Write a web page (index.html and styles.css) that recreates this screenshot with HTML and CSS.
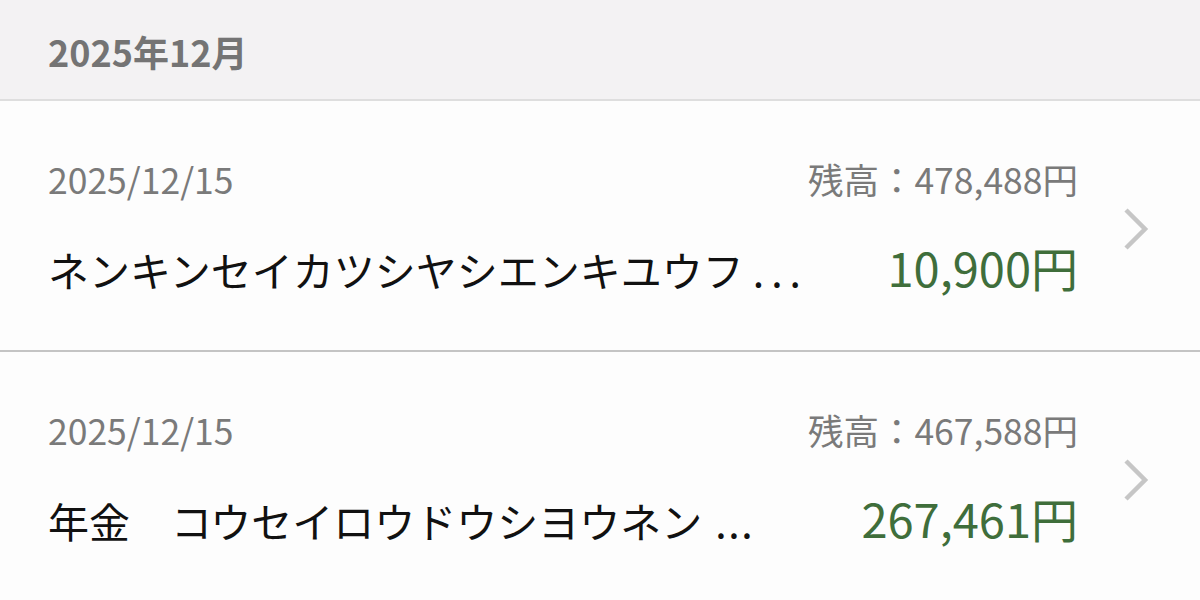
FILE: index.html
```html
<!DOCTYPE html>
<html lang="ja">
<head>
<meta charset="utf-8">
<link rel="stylesheet" href="styles.css">
</head>
<body>
<div class="page">
  <div class="month">2025年12月</div>
  <div class="row">
    <div class="main">
      <div class="line top">
        <span class="date">2025/12/15</span>
        <span class="balance">残高：478,488円</span>
      </div>
      <div class="line bottom">
        <span class="name">ネンキンセイカツシヤシエンキユウフ<span class="dots wide">...</span></span>
        <span class="amount">10,900円</span>
      </div>
    </div>
    <div class="chev">
      <svg width="28" height="44" viewBox="0 0 28 44"><path d="M4 3 L23 22 L4 41" fill="none" stroke="#c6c6c6" stroke-width="4.5"/></svg>
    </div>
  </div>
  <div class="row">
    <div class="main">
      <div class="line top">
        <span class="date">2025/12/15</span>
        <span class="balance">残高：467,588円</span>
      </div>
      <div class="line bottom">
        <span class="name">年金　コウセイロウドウシヨウネン<span class="dots narrow">...</span></span>
        <span class="amount">267,461円</span>
      </div>
    </div>
    <div class="chev">
      <svg width="28" height="44" viewBox="0 0 28 44"><path d="M4 3 L23 22 L4 41" fill="none" stroke="#c6c6c6" stroke-width="4.5"/></svg>
    </div>
  </div>
</div>
</body>
</html>
```
FILE: styles.css
```css
html, body {
  margin: 0;
  padding: 0;
  background: #fdfdfd;
}
body {
  font-family: "Noto Sans CJK JP", "Noto Sans", sans-serif;
  width: 1200px;
  height: 600px;
  overflow: hidden;
}
.month {
  height: 101px;
  box-sizing: border-box;
  background: #f3f2f3;
  border-bottom: 2px solid #dedede;
  padding-left: 48px;
  padding-top: 2px;
  display: flex;
  align-items: center;
  font-size: 36px;
  font-weight: 700;
  color: #747474;
  line-height: 1;
}
.row {
  position: relative;
  height: 251px;
  box-sizing: border-box;
  border-bottom: 2px solid #c4c4c4;
  background: #fdfdfd;
}
.main {
  padding: 60px 122px 0 48px;
  display: flex;
  flex-direction: column;
  gap: 46px;
}
.line {
  display: flex;
  justify-content: space-between;
  align-items: baseline;
  line-height: 1;
}
.date, .balance {
  font-size: 35.5px;
  color: #7a7a7a;
}
.name {
  font-size: 41px;
  color: #111;
  white-space: nowrap;
}
.dots.wide {
  margin-left: 9px;
  letter-spacing: 7px;
}
.dots.narrow {
  margin-left: 13px;
  letter-spacing: 1.5px;
}
.amount {
  font-size: 47px;
  color: #3f6e3b;
}
.chev {
  position: absolute;
  right: 50px;
  top: 106px;
}
.chev svg { display: block; }
```
